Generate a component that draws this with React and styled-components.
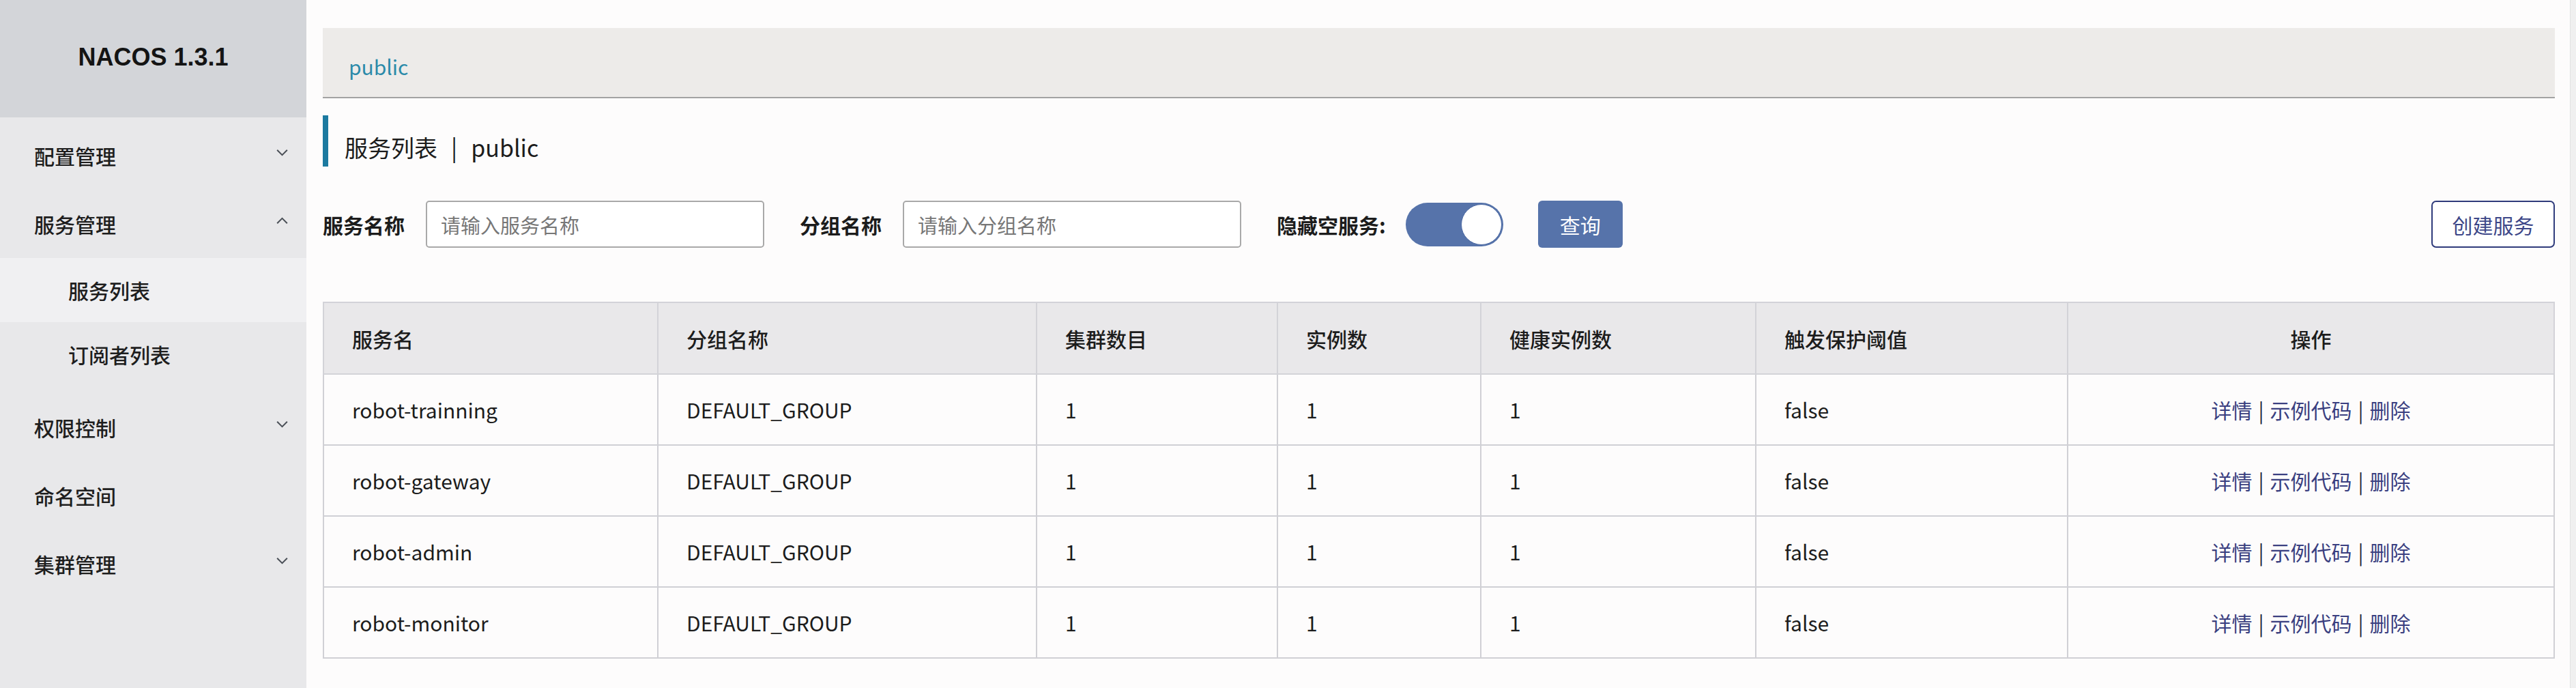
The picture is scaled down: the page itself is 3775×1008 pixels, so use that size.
import React from 'react';
import styled, { createGlobalStyle } from 'styled-components';

const FONT = '"Noto Sans CJK SC", "Noto Sans", sans-serif';

const GlobalStyle = createGlobalStyle`
  html, body {
    margin: 0;
    padding: 0;
    background: #fdfcfc;
    font-family: ${FONT};
    color: #222;
  }
  * {
    box-sizing: border-box;
  }
`;

const menu = [
  { label: '配置管理', arrow: 'down' },
  {
    label: '服务管理',
    arrow: 'up',
    children: [
      { label: '服务列表', active: true },
      { label: '订阅者列表' },
    ],
  },
  { label: '权限控制', arrow: 'down' },
  { label: '命名空间' },
  { label: '集群管理', arrow: 'down' },
];

const services = [
  'robot-trainning',
  'robot-gateway',
  'robot-admin',
  'robot-monitor',
];

const columns = [
  { title: '服务名', width: 490 },
  { title: '分组名称', width: 555 },
  { title: '集群数目', width: 353 },
  { title: '实例数', width: 298 },
  { title: '健康实例数', width: 403 },
  { title: '触发保护阈值', width: 457 },
  { title: '操作', width: 713, center: true },
];

function Chevron({ dir }) {
  return (
    <ChevronIcon viewBox="0 0 20 12" $up={dir === 'up'}>
      <path d="M2 2 L10 10 L18 2" fill="none" stroke="#4a4f57" strokeWidth="2.2" />
    </ChevronIcon>
  );
}

function Sidebar() {
  return (
    <SideWrapper>
      <Logo>NACOS 1.3.1</Logo>
      <Menu>
        {menu.map(item => (
          <React.Fragment key={item.label}>
            <MenuItem>
              <span>{item.label}</span>
              {item.arrow && <Chevron dir={item.arrow} />}
            </MenuItem>
            {item.children && (
              <SubMenu>
                {item.children.map(sub => (
                  <SubItem key={sub.label} $active={sub.active}>
                    {sub.label}
                  </SubItem>
                ))}
              </SubMenu>
            )}
          </React.Fragment>
        ))}
      </Menu>
    </SideWrapper>
  );
}

function Filters() {
  return (
    <FilterRow>
      <FieldLabel>服务名称</FieldLabel>
      <TextInput placeholder="请输入服务名称" />
      <FieldLabel $gap>分组名称</FieldLabel>
      <TextInput placeholder="请输入分组名称" />
      <FieldLabel $gap>隐藏空服务:</FieldLabel>
      <Switch>
        <Knob />
      </Switch>
      <PrimaryButton>查询</PrimaryButton>
      <Spacer />
      <OutlineButton>创建服务</OutlineButton>
    </FilterRow>
  );
}

function ServiceTable() {
  return (
    <Table>
      <colgroup>
        {columns.map(c => (
          <col key={c.title} style={{ width: c.width }} />
        ))}
      </colgroup>
      <thead>
        <tr>
          {columns.map(c => (
            <Th key={c.title} $center={c.center}>{c.title}</Th>
          ))}
        </tr>
      </thead>
      <tbody>
        {services.map(name => (
          <tr key={name}>
            <Td>{name}</Td>
            <Td>DEFAULT_GROUP</Td>
            <Td>1</Td>
            <Td>1</Td>
            <Td>1</Td>
            <Td>false</Td>
            <Td $center>
              <OpLink>详情</OpLink>
              <OpSep>|</OpSep>
              <OpLink>示例代码</OpLink>
              <OpSep>|</OpSep>
              <OpLink>删除</OpLink>
            </Td>
          </tr>
        ))}
      </tbody>
    </Table>
  );
}

export default function App() {
  return (
    <>
      <GlobalStyle />
      <Page>
        <Sidebar />
        <Main>
          <Breadcrumb>
            <Crumb>public</Crumb>
          </Breadcrumb>
          <PageTitle>
            服务列表<TitleSep>|</TitleSep>public
          </PageTitle>
          <Filters />
          <ServiceTable />
        </Main>
        <ScrollTrack />
      </Page>
    </>
  );
}

const Page = styled.div`
  display: flex;
  width: 3775px;
  height: 1008px;
  overflow: hidden;
`;

const SideWrapper = styled.aside`
  width: 449px;
  flex-shrink: 0;
  background: #e8e8ea;
  display: flex;
  flex-direction: column;
`;

const Logo = styled.div`
  height: 172px;
  background: #d3d5d9;
  display: flex;
  align-items: center;
  justify-content: center;
  font-family: "Liberation Sans", Arial, sans-serif;
  font-weight: 700;
  font-size: 36px;
  color: #141414;
  padding-bottom: 4px;
`;

const Menu = styled.nav`
  padding-top: 6px;
`;

const MenuItem = styled.div`
  height: 100px;
  display: flex;
  align-items: center;
  justify-content: space-between;
  padding: 0 26px 0 50px;
  font-size: 30px;
  font-weight: 500;
  color: #1e1e1e;
`;

const ChevronIcon = styled.svg`
  width: 19px;
  height: 11px;
  margin-top: -10px;
  transform: ${p => (p.$up ? 'rotate(180deg)' : 'none')};
`;

const SubMenu = styled.div`
  padding-bottom: 10px;
`;

const SubItem = styled.div`
  height: 94px;
  display: flex;
  align-items: center;
  padding-left: 100px;
  font-size: 30px;
  font-weight: 500;
  color: #1e1e1e;
  background: ${p => (p.$active ? '#f0f0f2' : 'transparent')};
`;

const Main = styled.main`
  flex: 1;
  min-width: 0;
  padding: 41px 22px 0 24px;
  display: flex;
  flex-direction: column;
`;

const Breadcrumb = styled.div`
  height: 103px;
  background: #edebe9;
  border-bottom: 2px solid #a3a3a3;
  display: flex;
  align-items: center;
  padding-left: 38px;
  padding-top: 10px;
`;

const Crumb = styled.span`
  font-size: 30px;
  color: #2b8aa9;
`;

const PageTitle = styled.h1`
  margin: 25px 0 0;
  height: 75px;
  border-left: 8px solid #1c7aa0;
  padding: 18px 0 0 24px;
  display: flex;
  align-items: center;
  font-size: 34px;
  font-weight: 400;
  color: #1c1c1c;
`;

const TitleSep = styled.span`
  margin: 0 20px;
`;

const FilterRow = styled.div`
  margin-top: 50px;
  height: 69px;
  display: flex;
  align-items: center;
`;

const FieldLabel = styled.label`
  font-size: 30px;
  font-weight: 700;
  color: #1c1c1c;
  margin-left: ${p => (p.$gap ? '52px' : '0')};
  margin-right: 31px;
  white-space: nowrap;
`;

const TextInput = styled.input`
  width: 496px;
  height: 69px;
  border: 2px solid #a9a9a9;
  border-radius: 5px;
  background: #fff;
  padding: 0 20px;
  font-family: ${FONT};
  font-size: 29px;
  color: #333;
  outline: none;

  &::placeholder {
    color: #777;
  }
`;

const Switch = styled.div`
  width: 143px;
  height: 64px;
  margin-left: -2px;
  border-radius: 32px;
  background: #5673aa;
  display: flex;
  align-items: center;
  justify-content: flex-end;
  padding: 2px;
`;

const Knob = styled.div`
  width: 60px;
  height: 60px;
  border-radius: 50%;
  background: #fff;
  border: 1px solid #4d6aa3;
`;

const PrimaryButton = styled.button`
  margin-left: 51px;
  width: 124px;
  height: 69px;
  border: none;
  border-radius: 6px;
  background: #5673aa;
  color: #fff;
  font-family: ${FONT};
  font-size: 30px;
`;

const Spacer = styled.div`
  flex: 1;
`;

const OutlineButton = styled.button`
  width: 181px;
  height: 69px;
  border: 2px solid #2f3b7b;
  border-radius: 7px;
  background: #fff;
  color: #3d4788;
  font-family: ${FONT};
  font-size: 30px;
`;

const Table = styled.table`
  margin-top: 79px;
  width: 3270px;
  border-collapse: collapse;
  table-layout: fixed;
  border: 2px solid #cfcfd4;
`;

const Th = styled.th`
  height: 105px;
  background: #e9e8ea;
  border: 2px solid #d3d3d8;
  padding: 0 0 0 41px;
  text-align: ${p => (p.$center ? 'center' : 'left')};
  font-size: 30px;
  font-weight: 500;
  color: #1c1c1c;
  ${p => p.$center && 'padding-left: 0;'}
`;

const Td = styled.td`
  height: 104px;
  background: #fdfcfc;
  border: 2px solid #d0d0d5;
  padding: 0 0 0 41px;
  text-align: ${p => (p.$center ? 'center' : 'left')};
  font-size: 30px;
  color: #1c1c1c;
  white-space: nowrap;
  ${p => p.$center && 'padding-left: 0;'}
`;

const OpLink = styled.a`
  color: #3a3f80;
  cursor: pointer;
`;

const OpSep = styled.span`
  margin: 0 9px;
  color: #2a2a40;
`;

const ScrollTrack = styled.div`
  width: 9px;
  flex-shrink: 0;
  background: #f0f0f0;
  border-left: 1px solid #e2e2e2;
`;
